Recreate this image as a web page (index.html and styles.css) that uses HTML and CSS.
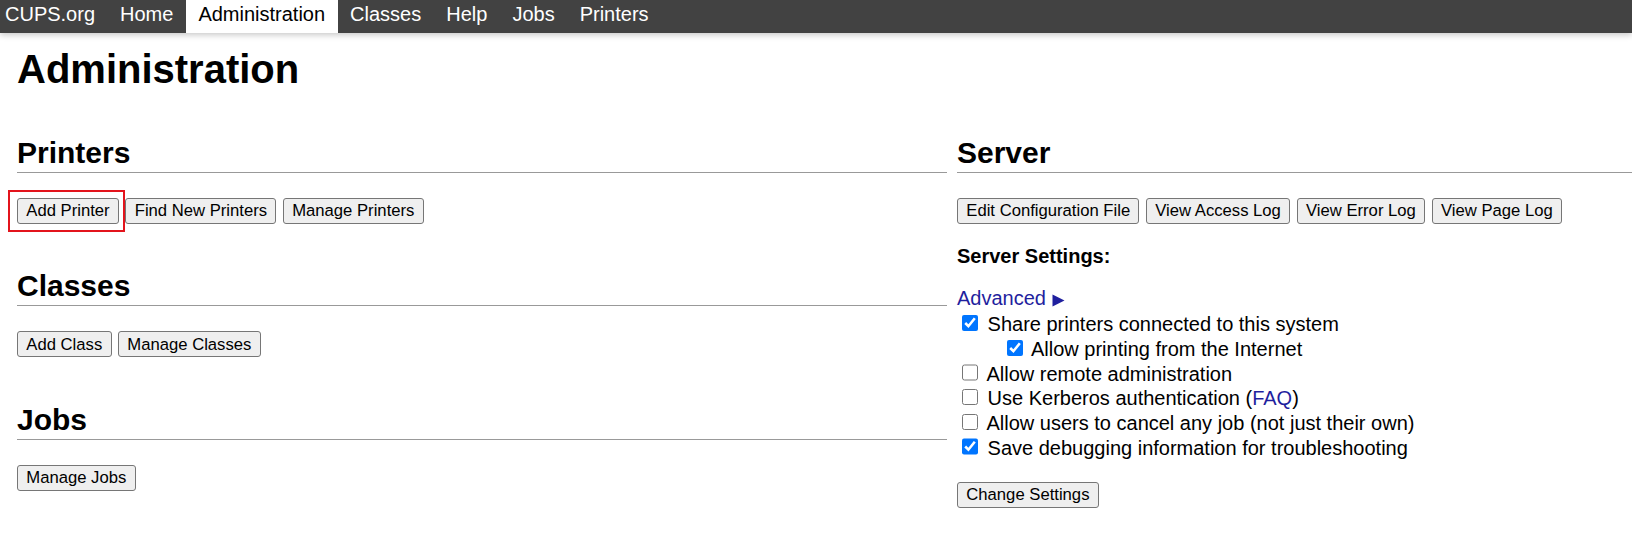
FILE: index.html
```html
<!DOCTYPE html>
<html lang="en">
<head>
<meta charset="utf-8">
<title>Administration - CUPS</title>
<link rel="stylesheet" href="styles.css">
</head>
<body>
<nav class="header">
  <a class="nav-link first" href="#">CUPS.org</a>
  <a class="nav-link" href="#">Home</a>
  <a class="nav-link active" href="#">Administration</a>
  <a class="nav-link" href="#">Classes</a>
  <a class="nav-link" href="#">Help</a>
  <a class="nav-link" href="#">Jobs</a>
  <a class="nav-link" href="#">Printers</a>
</nav>
<main class="body">
  <h1 class="title">Administration</h1>
  <div class="columns">
    <div class="col">
      <section class="section">
        <h2 class="heading">Printers</h2>
        <div class="buttons">
          <span class="highlight-wrap"><button class="btn">Add Printer</button><span class="highlight"></span></span>
          <button class="btn">Find New Printers</button>
          <button class="btn">Manage Printers</button>
        </div>
      </section>
      <section class="section next">
        <h2 class="heading">Classes</h2>
        <div class="buttons">
          <button class="btn">Add Class</button>
          <button class="btn">Manage Classes</button>
        </div>
      </section>
      <section class="section next">
        <h2 class="heading">Jobs</h2>
        <div class="buttons">
          <button class="btn">Manage Jobs</button>
        </div>
      </section>
    </div>
    <div class="col">
      <section class="section">
        <h2 class="heading">Server</h2>
        <div class="buttons">
          <button class="btn">Edit Configuration File</button>
          <button class="btn">View Access Log</button>
          <button class="btn">View Error Log</button>
          <button class="btn">View Page Log</button>
        </div>
      </section>
      <p class="settings-title">Server Settings:</p>
      <p class="advanced"><a class="link" href="#">Advanced <svg class="tri" width="13" height="13" viewBox="0 0 13 13"><polygon points="0.5,0.5 12.5,6.5 0.5,12.5" fill="currentColor"/></svg></a></p>
      <div class="options">
        <div class="opt"><input type="checkbox" checked> Share printers connected to this system</div>
        <div class="opt indent"><input type="checkbox" checked> Allow printing from the Internet</div>
        <div class="opt"><input type="checkbox"> Allow remote administration</div>
        <div class="opt"><input type="checkbox"> Use Kerberos authentication (<a class="link" href="#">FAQ</a>)</div>
        <div class="opt"><input type="checkbox"> Allow users to cancel any job (not just their own)</div>
        <div class="opt"><input type="checkbox" checked> Save debugging information for troubleshooting</div>
      </div>
      <div class="buttons change">
        <button class="btn">Change Settings</button>
      </div>
    </div>
  </div>
</main>
</body>
</html>
```
FILE: styles.css
```css
html, body {
  margin: 0;
  padding: 0;
  background: #ffffff;
}
body {
  font-family: "Liberation Sans", Arial, Helvetica, sans-serif;
  font-size: 20px;
  color: #000000;
  width: 1632px;
  overflow: hidden;
}
.header {
  display: flex;
  height: 33px;
  background: #424242;
  box-shadow: 0 2px 6px rgba(0, 0, 0, 0.22);
  position: relative;
  z-index: 1;
}
.nav-link {
  display: block;
  height: 33px;
  box-sizing: border-box;
  padding: 0 12.5px 5px 12.5px;
  line-height: 28px;
  font-size: 20px;
  color: #ffffff;
  text-decoration: none;
}
.nav-link.first {
  padding-left: 5px;
}
.nav-link.active {
  background: #ffffff;
  color: #000000;
}
.body {
  padding: 0 0 0 17px;
}
.title {
  margin: 13px 0 0 0;
  font-size: 40px;
  line-height: 46px;
  font-weight: bold;
}
.columns {
  display: grid;
  grid-template-columns: 930px 1fr;
  column-gap: 10px;
  margin-top: 44px;
}
.heading {
  margin: 0;
  font-size: 30px;
  line-height: 34px;
  font-weight: bold;
  padding-bottom: 2.2px;
  border-bottom: 1px solid #999999;
}
.section.next {
  margin-top: 45.3px;
}
.buttons {
  display: flex;
  gap: 6.5px;
  margin-top: 24.8px;
}
.btn {
  font-family: "Liberation Sans", Arial, Helvetica, sans-serif;
  font-size: 16.67px;
  line-height: 19px;
  padding: 2.5px 8.3px;
  border: 1px solid #767676;
  border-radius: 3px;
  background: #efefef;
  color: #000000;
  margin: 0;
}
.highlight-wrap {
  position: relative;
  display: inline-block;
}
.highlight-wrap .btn {
  display: block;
}
.highlight {
  position: absolute;
  left: -9px;
  top: -8px;
  width: 117px;
  height: 42px;
  box-sizing: border-box;
  border: 2px solid #e3141c;
  pointer-events: none;
}
.settings-title {
  margin: 21.4px 0 0 0;
  font-weight: bold;
  font-size: 20px;
  line-height: 23px;
}
.advanced {
  margin: 19px 0 0 0;
  line-height: 23px;
}
.link {
  color: #1f1f9e;
  text-decoration: none;
}
.tri {
  display: inline-block;
  vertical-align: -1.5px;
  margin-left: 0;
}
.options {
  margin-top: 2px;
}
.opt {
  line-height: 24.66px;
  white-space: nowrap;
}
.opt.indent {
  padding-left: 44.5px;
}
.opt input {
  width: 16.25px;
  height: 16.25px;
  margin: 0 3.75px 0 5px;
  vertical-align: baseline;
}
.buttons.change {
  margin-top: 21.3px;
}
```
